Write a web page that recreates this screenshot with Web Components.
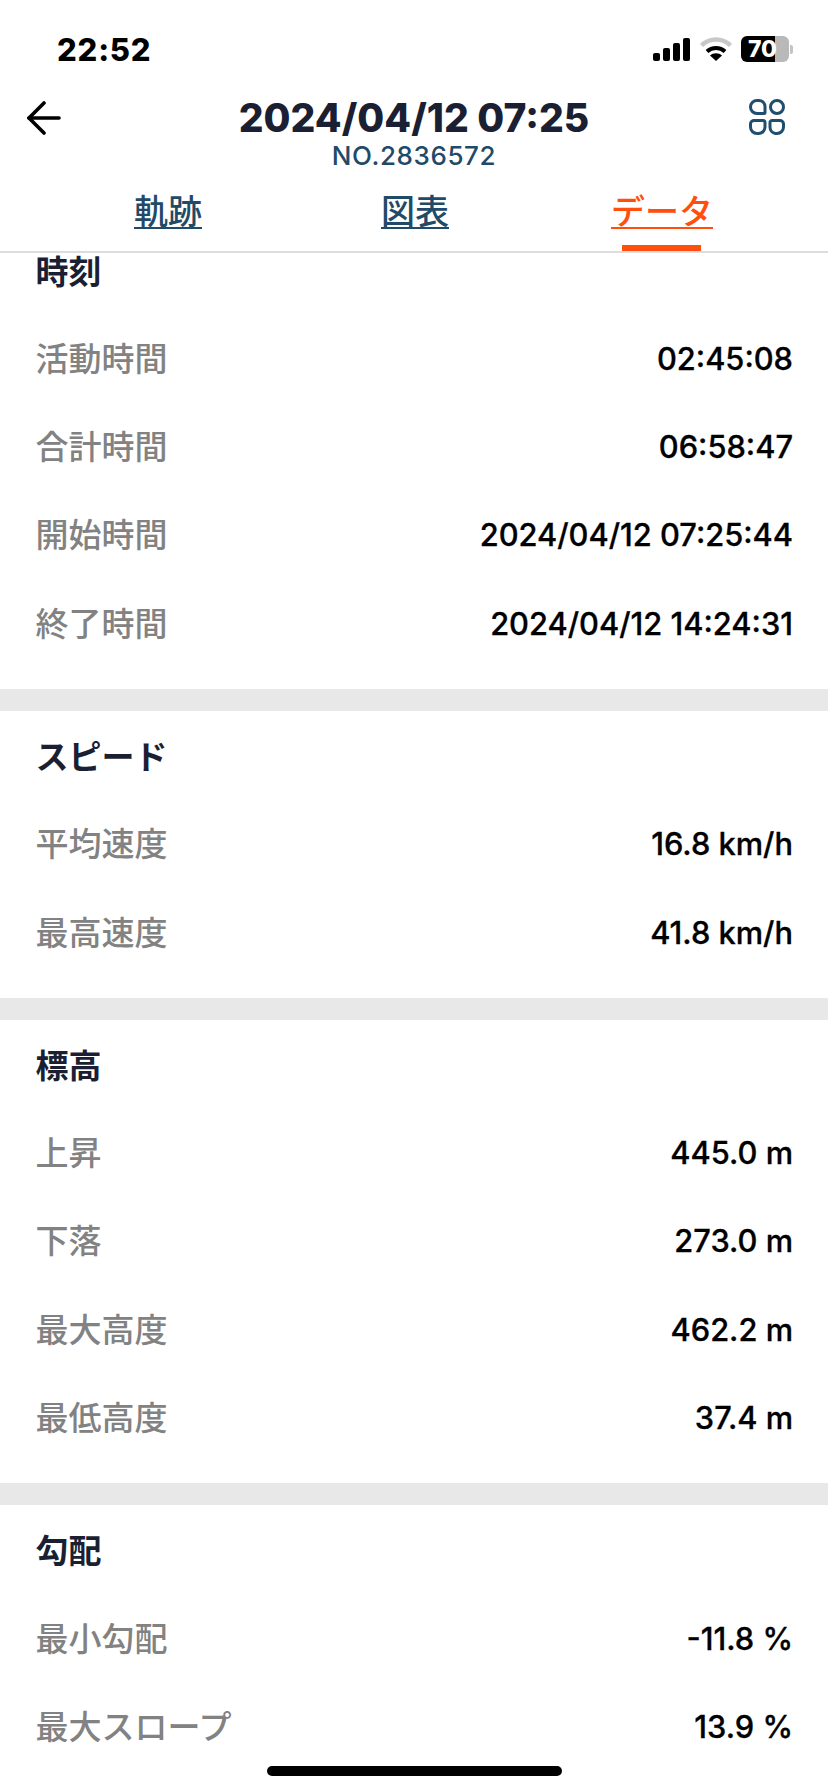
<!DOCTYPE html>
<html lang="ja">
<head>
<meta charset="utf-8">
<title>データ</title>
<style>
  html, body { margin: 0; padding: 0; background: #fff; }
  body {
    width: 828px;
    height: 1792px;
    overflow: hidden;
    font-family: Inter, "Noto Sans CJK JP", sans-serif;
  }
</style>
</head>
<body>
<activity-screen>
  <status-bar slot="top" time="22:52" battery="70"></status-bar>
  <activity-header slot="top" title="2024/04/12 07:25" no="NO.2836572"></activity-header>
  <activity-tabs slot="top" tabs="軌跡,図表,データ" active="2"></activity-tabs>

  <data-section heading="時刻">
    <data-row label="活動時間" value="02:45:08"></data-row>
    <data-row label="合計時間" value="06:58:47"></data-row>
    <data-row label="開始時間" value="2024/04/12 07:25:44"></data-row>
    <data-row label="終了時間" value="2024/04/12 14:24:31"></data-row>
  </data-section>
  <data-section heading="スピード">
    <data-row label="平均速度" value="16.8 km/h"></data-row>
    <data-row label="最高速度" value="41.8 km/h"></data-row>
  </data-section>
  <data-section heading="標高">
    <data-row label="上昇" value="445.0 m"></data-row>
    <data-row label="下落" value="273.0 m"></data-row>
    <data-row label="最大高度" value="462.2 m"></data-row>
    <data-row label="最低高度" value="37.4 m"></data-row>
  </data-section>
  <data-section heading="勾配">
    <data-row label="最小勾配" value="-11.8 %"></data-row>
    <data-row label="最大スロープ" value="13.9 %"></data-row>
  </data-section>
</activity-screen>

<script>
class ActivityScreen extends HTMLElement {
  constructor() {
    super();
    this.attachShadow({ mode: "open" });
    this.shadowRoot.innerHTML = /* html */`
    <style>
      :host { display: flex; flex-direction: column; width: 828px; height: 1792px; position: relative; overflow: hidden; background: #fff; }
      .top { flex: none; }
      .scroll { flex: 1; min-height: 0; overflow: hidden; }
      /* the list is scrolled a little, the first heading sits under the tabs */
      .list { margin-top: -27.5px; }
      .home {
        position: absolute; left: 267px; top: 1766px;
        width: 295px; height: 10px; border-radius: 5px; background: #000;
      }
    </style>
    <div class="top"><slot name="top"></slot></div>
    <div class="scroll"><div class="list"><slot></slot></div></div>
    <div class="home"></div>`;
  }
}

class StatusBar extends HTMLElement {
  constructor() {
    super();
    this.attachShadow({ mode: "open" });
  }

  connectedCallback() {
    this.shadowRoot.innerHTML = /* html */`
    <style>
      :host { display: flex; align-items: center; height: 98px; box-sizing: border-box; padding: 0 35px 0 57px; color: #000; }
      .time { font: 800 31px/1 Inter, sans-serif; letter-spacing: .8px; flex: 1; }
      svg { display: block; }
      .icons { display: flex; align-items: center; }
      .wifi { margin-left: 10px; }
      .battery {
        margin-left: 9px; width: 48px; height: 26px; border-radius: 6px;
        background: linear-gradient(90deg, #000 70%, #b9b9b9 70%);
        color: #fff; font: 800 23px/26px Inter, sans-serif; text-align: center; padding-right: 5px; box-sizing: border-box;
      }
      .nub { width: 3px; height: 9px; margin-left: 1px; border-radius: 0 2px 2px 0; background: #c4c4c4; }
    </style>
    <div class="time">${this.getAttribute("time")}</div>
    <div class="icons">
      <svg width="37" height="23" viewBox="0 0 37 23" fill="#000">
        <rect x="0" y="15" width="7" height="8" rx="2"/>
        <rect x="10" y="10" width="7" height="13" rx="2"/>
        <rect x="20" y="5" width="7" height="18" rx="2"/>
        <rect x="30" y="0" width="7" height="23" rx="2"/>
      </svg>
      <svg class="wifi" width="32" height="24" viewBox="0 0 32 24" fill="none">
        <path d="M1.500 8.500C9.500 .5 22.500 .5 30.500 8.500" stroke="#c8c8c8" stroke-width="4.500"/>
        <path d="M7 14.500C12 9.800 20 9.800 25 14.500" stroke="#000" stroke-width="4"/>
        <path d="M16 24l-6-5.600c3.400-3 8.600-3 12 0z" fill="#000"/>
      </svg>
      <div class="battery">${this.getAttribute("battery")}</div>
      <div class="nub"></div>
    </div>`;
  }
}

class ActivityHeader extends HTMLElement {
  constructor() {
    super();
    this.attachShadow({ mode: "open" });
  }

  connectedCallback() {
    this.shadowRoot.innerHTML = /* html */`
    <style>
      :host { display: grid; grid-template-columns: 115px 1fr 115px; height: 73px; color: #1b1f33; }
      .back { padding: 3px 0 0 27px; }
      .center { text-align: center; }
      .title { font: 800 39px/40px Inter, sans-serif; }
      .no { font: 500 26px/26px Inter, sans-serif; color: #1f4a68; letter-spacing: .6px; margin-top: 5px; }
      .menu { display: flex; justify-content: flex-end; padding: 0 41px 0 0; }
      svg { display: block; }
    </style>
    <div class="back">
      <svg width="34" height="34" viewBox="0 0 34 34" fill="none" stroke="#000" stroke-width="3.600" stroke-linecap="round">
        <path d="M32 17H2"/><path d="M17 2L2 17l15 15"/>
      </svg>
    </div>
    <div class="center">
      <div class="title">${this.getAttribute("title")}</div>
      <div class="no">${this.getAttribute("no")}</div>
    </div>
    <div class="menu">
      <svg width="38" height="38" viewBox="0 0 38 38" fill="none" stroke="#1f4e6e" stroke-width="3">
        <path d="M8 2.500h2a6 6 0 0 1 6 6v6a1 1 0 0 1-1 1H8a6.500 6.500 0 0 1 0-13z"/>
        <circle cx="28" cy="9" r="6.500"/>
        <path d="M5 22.500h9a2 2 0 0 1 2 2v4.500a6.500 6.500 0 0 1-6.500 6.500H8A6.500 6.500 0 0 1 1.500 29v-3a3.500 3.500 0 0 1 3.500-3.500z"/>
        <path d="M23.500 22.500H31a3.500 3.500 0 0 1 3.500 3.500v3a6.500 6.500 0 0 1-6.500 6.500h-1.500A6.500 6.500 0 0 1 21 29v-4.500a2 2 0 0 1 2.500-2z"/>
      </svg>
    </div>`;
  }
}

class ActivityTabs extends HTMLElement {
  constructor() {
    super();
    this.attachShadow({ mode: "open" });
  }

  connectedCallback() {
    const active = Number(this.getAttribute("active"));
    const tabs = this.getAttribute("tabs").split(",").map((name, i) => /* html */`
      <div class="tab ${i === active ? "on" : ""}"><span>${name}</span></div>`).join("");
    this.shadowRoot.innerHTML = /* html */`
    <style>
      :host { display: grid; grid-template-columns: repeat(3, 247px); justify-content: center; height: 80px; padding-left: 2px; border-bottom: 2px solid #ddd; }
      .tab {
        position: relative; text-align: center; color: #1f4a68;
        font: 500 34px/50px "Noto Sans CJK JP", sans-serif; text-decoration: underline; text-underline-offset: 3px; text-decoration-thickness: 2px;
        padding-top: 14px;
      }
      .on { color: #ff4e0d; }
      .on::after {
        content: ""; position: absolute; left: 83px; bottom: 0; width: 79px; height: 6px; background: #ff4e0d;
      }
    </style>
    ${tabs}`;
  }
}

class DataSection extends HTMLElement {
  constructor() {
    super();
    this.attachShadow({ mode: "open" });
  }

  connectedCallback() {
    this.shadowRoot.innerHTML = /* html */`
    <style>
      :host { display: block; padding: 0 35px 22px 35.500px; border-bottom: 22px solid #e8e8e8; }
      .heading { font: 700 33px/88px "Noto Sans CJK JP", sans-serif; color: #1b1f33; height: 88.300px; }
    </style>
    <div class="heading">${this.getAttribute("heading")}</div>
    <slot></slot>`;
  }
}

class DataRow extends HTMLElement {
  constructor() {
    super();
    this.attachShadow({ mode: "open" });
  }

  connectedCallback() {
    this.shadowRoot.innerHTML = /* html */`
    <style>
      :host { display: flex; justify-content: space-between; height: 88.300px; }
      .label { font: 500 33px/87px "Noto Sans CJK JP", sans-serif; color: #828282; }
      .value { font: 500 30.800px/90px Inter, sans-serif; color: #000; -webkit-text-stroke: .3px #000; }
    </style>
    <span class="label">${this.getAttribute("label")}</span>
    <span class="value">${this.getAttribute("value")}</span>`;
  }
}

customElements.define("activity-screen", ActivityScreen);
customElements.define("status-bar", StatusBar);
customElements.define("activity-header", ActivityHeader);
customElements.define("activity-tabs", ActivityTabs);
customElements.define("data-section", DataSection);
customElements.define("data-row", DataRow);
</script>
</body>
</html>
